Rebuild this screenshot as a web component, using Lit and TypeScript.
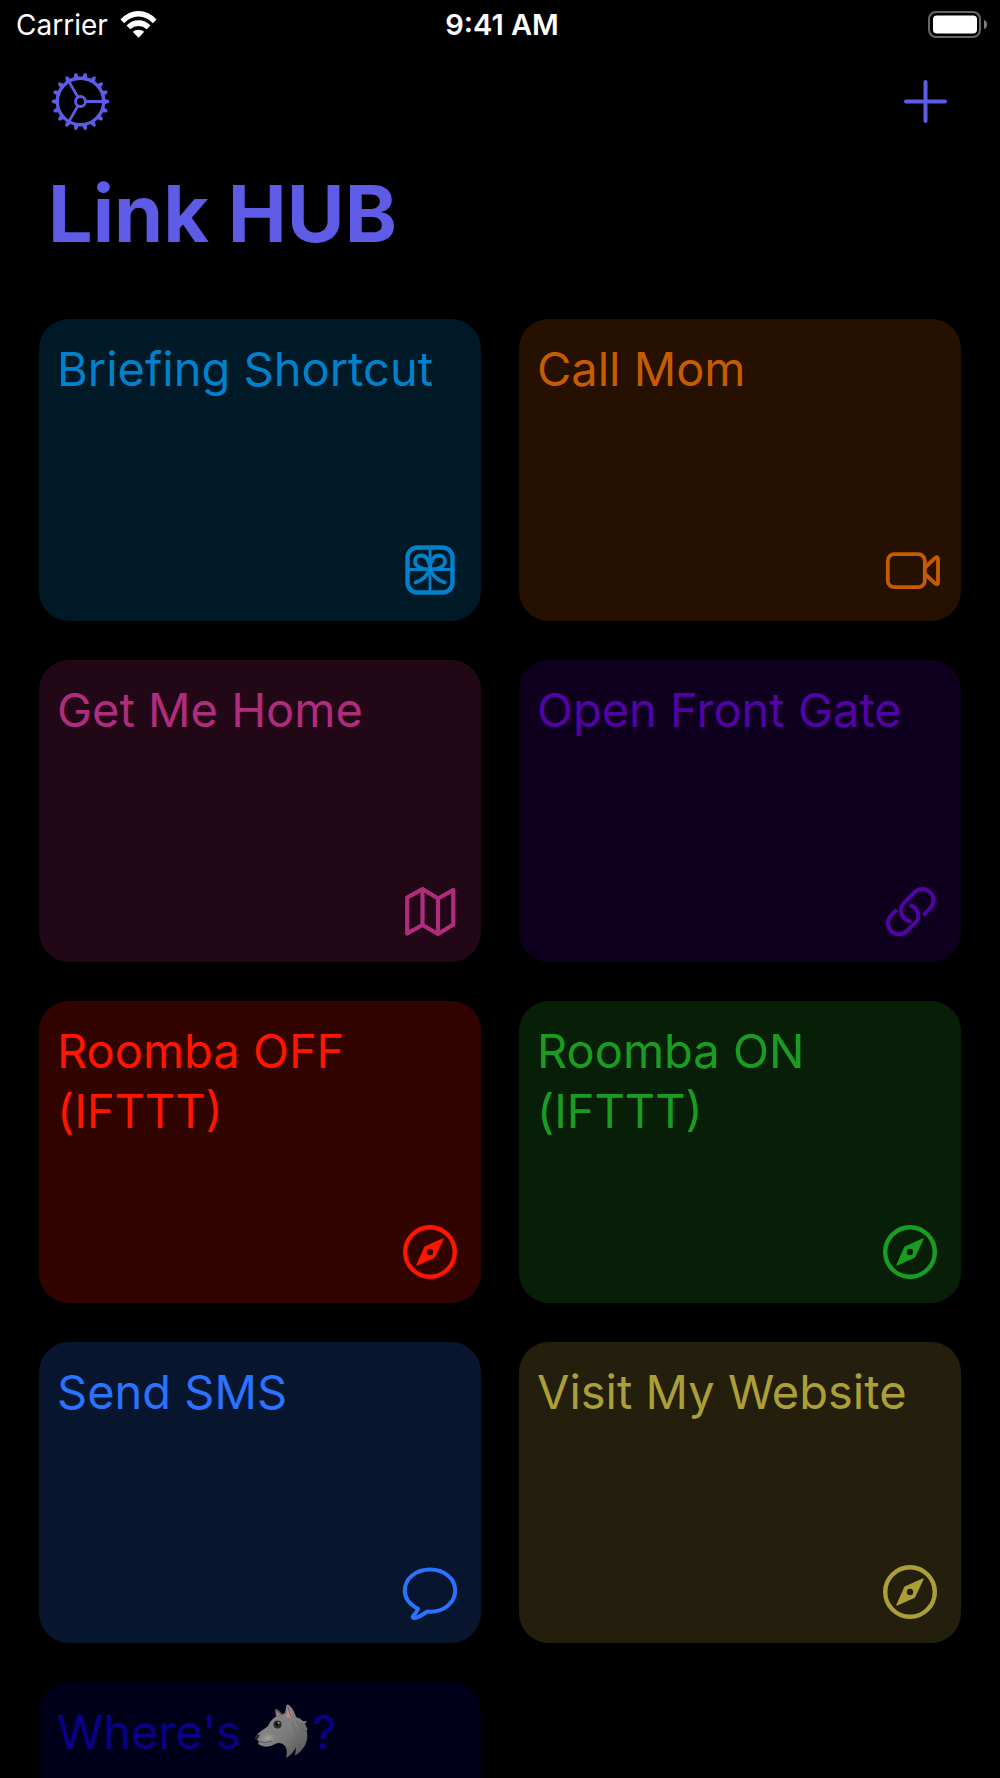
import { LitElement, html, svg, css } from "lit";
import { customElement, property } from "lit/decorators.js";

type IconName = "gift" | "video" | "map" | "link" | "compass" | "bubble";

interface LinkItem {
  title: string;
  icon: IconName;
  tone: string;
}

const icons: Record<IconName, unknown> = {
  gift: svg`
    <rect x="7.5" y="7.5" width="45" height="45" rx="10" stroke-width="4.4"/>
    <path d="M30 8V52M8 29.5H52" stroke-width="2.8"/>
    <path d="M30 29.5C24 29.5 15 27.5 15 21.5C15 17.5 18 15.5 21 15.5C27 15.5 30 22 30 29.5C30 22 33 15.5 39 15.5C42 15.5 45 17.5 45 21.5C45 27.5 36 29.5 30 29.5C27 36 22 40.5 15.5 42.5M30 29.5C33 36 38 40.5 44.5 42.5" stroke-width="3.8"/>`,
  video: svg`
    <rect x="7.8" y="14.2" width="37" height="33" rx="6.5" stroke-width="3.8"/>
    <path d="M45 27.5 55 18.2Q58 16 58 19V42.5Q58 45.5 55 43.3L45 34" stroke-width="3.8"/>`,
  map: svg`
    <path d="M7.2 16.7 22.5 8 38 17.5 53.3 9V43.5L38 53 22.5 44 7.2 52.5ZM22.5 8V44M38 17.5V53" stroke-width="4.2"/>`,
  link: svg`
    <path class="butt" d="M17 28.5 11.2 34.3A11.1 11.1 0 0 0 26.9 50L37.3 39.6A11.1 11.1 0 0 0 29.8 24.2" stroke-width="4"/>
    <path class="butt" d="M43.4 34.4 50.2 27A11.1 11.1 0 0 0 34.5 11.3L24.1 21.7A11.1 11.1 0 0 0 31.6 40.5" stroke-width="4"/>`,
  compass: svg`
    <circle cx="30" cy="30" r="24.8" stroke-width="4.4"/>
    <path d="M42.8 17.2 34.4 35 17.2 42.8 25 25.2Z" fill="currentColor" stroke-width="1.6"/>
    <circle class="hole" cx="30" cy="30" r="3.2" stroke="none"/>`,
  bubble: svg`
    <path d="M18 46.8C9.5 42.5 4.8 35.8 4.8 28.6C4.8 16.4 16 7.5 30 7.5S55.2 16.4 55.2 28.6S44 49.7 30 49.7C29 49.7 28 49.6 27.2 49.5C23.5 52 19 55.5 14.5 56C12.5 56.2 12.4 54.9 13.5 53.5C15.5 51.2 17.5 49 18 46.8Z" stroke-width="4"/>`,
};

const wolf = html`
  <svg class="emoji" viewBox="0 0 54 54" role="img" aria-label="wolf">
    <defs>
      <linearGradient id="fur" x1="0" y1="0" x2="1" y2="1">
        <stop offset="0" stop-color="#8b8b8b"/>
        <stop offset=".55" stop-color="#7d7d7d"/>
        <stop offset="1" stop-color="#505052"/>
      </linearGradient>
      <radialGradient id="muzzle">
        <stop offset="0" stop-color="#a3a3a3"/>
        <stop offset="1" stop-color="#858585" stop-opacity="0"/>
      </radialGradient>
    </defs>
    <path d="M22 13 21 6Q22 3 28 10Z" fill="#626262"/>
    <path d="M23 12 22.5 7.5 27 11Z" fill="#bd8080"/>
    <path d="M1 34 4 29.5 14 22Q17 14 25 11.5L31 9 32.5 1Q34-.5 36.5 2.5Q40 6 42 13Q46 14 49 17L53 17 51 20 54 26 52.5 26Q55 36 50 43Q46 49 41 51.5L42 43Q39 50 32 54Q34 46 31 42Q27 37 21 40Q15 44 8 42L4 40 5 37.5Z" fill="url(#fur)"/>
    <path d="M32 13 34 3Q38 6 39 14Q36 15 32 13Z" fill="#c28484"/>
    <path d="M34 3Q35 8 38 14" fill="none" stroke="#66605f" stroke-width="1"/>
    <ellipse cx="14" cy="34" rx="10" ry="7" fill="url(#muzzle)"/>
    <path d="M42 16Q50 27 46 40M47 19Q54 31 48 43M38 19Q45 30 42 43" fill="none" stroke="#6c6c6e" stroke-width="1"/>
    <path d="M1 34 4 30.5 6 31 3 36Z" fill="#252525"/>
    <path d="M4 37Q10 40 18 37" fill="none" stroke="#5b5b5b" stroke-width="1"/>
    <circle cx="23.5" cy="20.5" r="4" fill="#2b2b2b"/>
    <circle cx="23" cy="20" r="1.8" fill="#050505"/>
    <circle cx="24.5" cy="19" r="1" fill="#a5a5a5"/>
  </svg>`;

const teeth = Array.from({ length: 18 }, (_, i) => i * 20);

@customElement("status-bar")
class StatusBar extends LitElement {
  static styles = css`
    :host {
      display: grid;
      grid-template-columns: 1fr auto 1fr;
      align-items: center;
      height: 50px;
      padding: 0 12px 0 16px;
      color: #fff;
      font-size: 28px;
      line-height: 50px;
    }
    .carrier { display: flex; align-items: center; gap: 12px; }
    .time { font-size: 29px; font-weight: 600; }
    .wifi { width: 37px; height: 28px; }
    .battery { width: 60px; height: 28px; justify-self: end; }
  `;

  render() {
    return html`
      <div class="carrier">
        <span>Carrier</span>
        <svg class="wifi" viewBox="0 0 37 28" fill="#fff" role="img" aria-label="Wi-Fi">
          <path d="M0.5 8.5Q8 0 18.5 0T36.5 8.5L32.8 12.2Q26.5 5.6 18.5 5.6T4.2 12.2Z"/>
          <path d="M6.5 14.4Q11.5 9.2 18.5 9.2T30.5 14.4L26.7 18.2Q23 15 18.5 15T10.3 18.2Z"/>
          <path d="M12.7 20.7Q15.2 18.7 18.5 18.7T24.3 20.7L18.5 26.7Z"/>
        </svg>
      </div>
      <time class="time">9:41 AM</time>
      <svg class="battery" viewBox="0 0 60 28" role="img" aria-label="Battery full">
        <rect x="1" y="1" width="51" height="25" rx="7" fill="none" stroke="#666" stroke-width="2"/>
        <rect x="5" y="4.5" width="44" height="18" rx="4" fill="#fff"/>
        <path d="M56 9Q59 10 59 13.5T56 18Z" fill="#808080"/>
      </svg>
    `;
  }
}

@customElement("link-card")
class LinkCard extends LitElement {
  @property({ attribute: false }) item!: LinkItem;

  static styles = css`
    :host { display: grid; }
    .card {
      display: flex;
      flex-direction: column;
      justify-content: space-between;
      aspect-ratio: 41 / 28;
      box-sizing: border-box;
      width: 100%;
      padding: 20px 21px 21px 18px;
      border: 0;
      border-radius: 30px;
      background: var(--fill);
      color: var(--ink);
      font: inherit;
      font-size: 47px;
      line-height: 60px;
      text-align: left;
      cursor: pointer;
    }
    .icon {
      width: 60px;
      height: 60px;
      align-self: flex-end;
      fill: none;
      stroke: currentColor;
      stroke-linecap: round;
      stroke-linejoin: round;
    }
    .butt { stroke-linecap: butt; }
    .hole { fill: var(--fill); }
    .emoji { width: 54px; height: 54px; margin-right: 4px; vertical-align: -9px; }
    .blue { --ink: #0081cb; --fill: #001926; }
    .orange { --ink: #c65b00; --fill: #261100; }
    .pink { --ink: #b02c7c; --fill: #220817; }
    .purple { --ink: #5203a6; --fill: #0f001f; }
    .red { --ink: #ff1500; --fill: #310400; }
    .green { --ink: #1a9c22; --fill: #071e07; }
    .azure { --ink: #2973ff; --fill: #07152e; }
    .yellow { --ink: #ac9f37; --fill: #231f0c; }
    .navy { --ink: #0a0088; --fill: #00001a; }
  `;

  render() {
    const { title, icon, tone } = this.item;
    const [before, after] = title.split("🐺");
    return html`
      <button class="card ${tone}" type="button">
        <span>${before}${after === undefined ? "" : html`${wolf}${after}`}</span>
        <svg class="icon" viewBox="0 0 60 60" aria-hidden="true">${icons[icon]}</svg>
      </button>
    `;
  }
}

@customElement("app-root")
class AppRoot extends LitElement {
  private items: LinkItem[] = [
    { title: "Briefing Shortcut", icon: "gift", tone: "blue" },
    { title: "Call Mom", icon: "video", tone: "orange" },
    { title: "Get Me Home", icon: "map", tone: "pink" },
    { title: "Open Front Gate", icon: "link", tone: "purple" },
    { title: "Roomba OFF (IFTTT)", icon: "compass", tone: "red" },
    { title: "Roomba ON (IFTTT)", icon: "compass", tone: "green" },
    { title: "Send SMS", icon: "bubble", tone: "azure" },
    { title: "Visit My Website", icon: "compass", tone: "yellow" },
    { title: "Where's 🐺?", icon: "compass", tone: "navy" },
  ];

  static styles = css`
    :host {
      display: flex;
      flex-direction: column;
      height: 100vh;
      background: #000;
      color: #5e5ce6;
      font-family: Inter, "Liberation Sans", sans-serif;
    }
    .toolbar {
      display: flex;
      justify-content: space-between;
      padding: 22px 45px 0 50px;
    }
    .tool {
      display: flex;
      padding: 0;
      border: 0;
      background: none;
      color: inherit;
      cursor: pointer;
    }
    .tool svg {
      width: 60px;
      height: 60px;
      fill: none;
      stroke: currentColor;
      stroke-linecap: round;
    }
    .tooth { fill: currentColor; stroke: none; }
    .title {
      margin: 0;
      padding: 32px 48px 57px;
      font-size: 79px;
      line-height: 98px;
      font-weight: 700;
    }
    .content {
      flex: 1;
      min-height: 0;
      overflow-y: auto;
      scrollbar-width: none;
    }
    .grid {
      display: grid;
      grid-template-columns: repeat(2, 1fr);
      gap: 39px 38px;
      padding: 0 39px 39px;
    }
  `;

  render() {
    return html`
      <status-bar></status-bar>
      <header class="toolbar">
        <button class="tool" type="button" aria-label="Settings">
          <svg viewBox="0 0 60 60">
            <circle cx="30.5" cy="29.5" r="23.2" stroke-width="3.4"/>
            <circle cx="30.5" cy="29.5" r="5" stroke-width="2.8"/>
            <path d="M36 29.5H53M27.7 24.7 19 9.6M27.7 34.3 19 49.4" stroke-width="2.8"/>
            ${teeth.map((a) => svg`<path class="tooth" transform="rotate(${a} 30.5 29.5)" d="M54 26.7 58.6 28.1Q60.2 29.5 58.6 30.9L54 32.3Z"/>`)}
          </svg>
        </button>
        <button class="tool" type="button" aria-label="Add link">
          <svg viewBox="0 0 60 60">
            <path d="M30.5 10V49M11 29.5H50" stroke-width="4"/>
          </svg>
        </button>
      </header>
      <main class="content">
        <h1 class="title">Link HUB</h1>
        <div class="grid">
          ${this.items.map((item) => html`<link-card .item=${item}></link-card>`)}
        </div>
      </main>
    `;
  }
}
